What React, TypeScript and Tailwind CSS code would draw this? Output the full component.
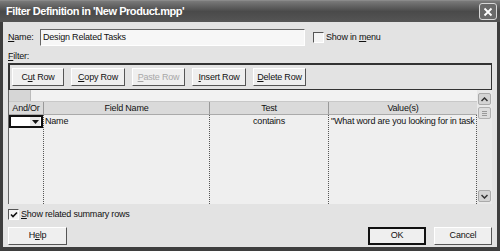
import * as React from "react";

const font = { fontFamily: '"Liberation Sans", Arial, sans-serif' };

const Btn = ({
  label,
  u,
  w = "w-[53px]",
  disabled = false,
  isDefault = false,
}: {
  label: string;
  u: number;
  w?: string;
  disabled?: boolean;
  isDefault?: boolean;
}) => (
  <div
    className={`${w} h-[18px] flex items-center justify-center bg-[#efefef] text-[9px] leading-none ${
      isDefault
        ? "border-2 border-[#111]"
        : "border border-t-white border-l-white border-r-[#555] border-b-[#555]"
    } ${disabled ? "text-[#a8a8a8]" : "text-[#111]"}`}
  >
    <span>
      {label.slice(0, u)}
      <span className="underline">{label.charAt(u)}</span>
      {label.slice(u + 1)}
    </span>
  </div>
);

const Check = ({ checked = false }: { checked?: boolean }) => (
  <div className="w-[11px] h-[11px] bg-[#f4f4f4] border border-t-[#555] border-l-[#555] border-r-white border-b-white flex items-center justify-center">
    {checked && (
      <svg width="8" height="8" viewBox="0 0 8 8">
        <path d="M1 3.5 L3 5.5 L7 1.5" stroke="#111" strokeWidth="1.6" fill="none" />
      </svg>
    )}
  </div>
);

export default function App() {
  return (
    <div className="w-[500px] h-[251px] bg-[#3e3e3e] flex flex-col overflow-hidden" style={font}>
      {/* Title bar */}
      <div className="h-[22px] shrink-0 flex items-center justify-between pl-[6px] pr-[3px] bg-gradient-to-b from-[#7a7a7a] via-[#4a4a4a] to-[#555] border-t border-[#8a8a8a]">
        <span className="text-white font-bold text-[11px] tracking-[-0.45px]">
          Filter Definition in 'New Product.mpp'
        </span>
        <div className="w-[18px] h-[17px] rounded-[3px] border border-[#d8d8d8] bg-[#6a6a6a] flex items-center justify-center">
          <svg width="10" height="10" viewBox="0 0 10 10">
            <path d="M1.5 1.5 L8.5 8.5 M8.5 1.5 L1.5 8.5" stroke="#fff" strokeWidth="1.8" />
          </svg>
        </div>
      </div>

      {/* Body */}
      <div className="flex-1 mx-[3px] mb-[4px] bg-[#e3e3e3] flex flex-col pl-[5px] pr-[5px] text-[9px] tracking-[-0.2px] text-[#111]">
        {/* Name row */}
        <div className="flex items-center mt-[7px] h-[17px]">
          <span className="w-[32px]">
            <span className="underline">N</span>ame:
          </span>
          <div className="w-[265px] h-[17px] bg-[#f7f7f7] border border-t-[#666] border-l-[#666] border-r-white border-b-white flex items-center pl-[2px]">
            Design Related Tasks
          </div>
          <div className="ml-[8px] flex items-center gap-[2px]">
            <Check />
            <span>
              Show in <span className="underline">m</span>enu
            </span>
          </div>
        </div>

        {/* Filter label */}
        <div className="mt-[4px] h-[12px] leading-[12px]">
          <span className="underline">F</span>ilter:
        </div>

        {/* Toolbar */}
        <div className="mt-[1px] h-[27px] border-2 border-[#333] border-r border-b flex items-center gap-[7px] pl-[2px]">
          <Btn label="Cut Row" u={1} w="w-[52px]" />
          <Btn label="Copy Row" u={0} w="w-[54px]" />
          <Btn label="Paste Row" u={0} w="w-[53px]" disabled />
          <Btn label="Insert Row" u={0} w="w-[54px]" />
          <Btn label="Delete Row" u={0} w="w-[53px]" />
        </div>

        {/* Grid */}
        <div className="h-[114px] flex border-l border-[#666]">
          <div className="flex-1 flex flex-col bg-[#efefef]">
            {/* edit bar */}
            <div className="h-[12px] flex border-b border-[#c8c8c8]">
              <div className="w-[22px] bg-[#d6d6d6] border-r border-[#bbb]" />
              <div className="flex-1 bg-[#f2f2f2]" />
            </div>
            {/* header */}
            <div className="h-[13px] flex bg-[#dadada] border-b border-[#aaa]">
              <div className="w-[35px] text-center border-r border-[#999]">And/Or</div>
              <div className="w-[166px] text-center border-r border-[#999]">Field Name</div>
              <div className="w-[119px] text-center border-r border-[#999]">Test</div>
              <div className="flex-1 text-center">Value(s)</div>
            </div>
            {/* rows */}
            <div className="flex-1 flex">
              <div className="w-[35px] border-r border-dotted border-[#555] flex flex-col">
                <div className="h-[13px] bg-white border-2 border-[#111] flex items-center justify-end pr-[1px]">
                  <div className="w-[10px] h-[9px] bg-[#e8e8e8] flex items-center justify-center">
                    <svg width="7" height="4" viewBox="0 0 7 4">
                      <path d="M0 0 L7 0 L3.5 4 Z" fill="#111" />
                    </svg>
                  </div>
                </div>
              </div>
              <div className="w-[166px] border-r border-dotted border-[#555] pl-[1px] leading-[13px]">Name</div>
              <div className="w-[119px] border-r border-dotted border-[#555] text-center leading-[13px]">contains</div>
              <div className="flex-1 border-r border-dotted border-[#555] pl-[2px] leading-[13px] whitespace-nowrap overflow-hidden">
                "What word are you looking for in task
              </div>
            </div>
          </div>
          {/* scrollbar */}
          <div className="w-[15px] bg-[#e9e9e9] flex flex-col items-center pt-[3px] pb-[2px]">
            <div className="w-[13px] h-[12px] rounded-[2px] bg-[#d4d4d4] border border-[#aaa] flex items-center justify-center">
              <svg width="7" height="5" viewBox="0 0 7 5">
                <path d="M0.5 4 L3.5 1 L6.5 4" stroke="#333" strokeWidth="1.5" fill="none" />
              </svg>
            </div>
            <div className="mt-[2px] w-[13px] h-[12px] rounded-[2px] bg-[#dcdcdc] border border-[#b0b0b0] flex flex-col items-center justify-center gap-[1px]">
              <div className="w-[5px] h-px bg-[#999]" />
              <div className="w-[5px] h-px bg-[#999]" />
              <div className="w-[5px] h-px bg-[#999]" />
            </div>
            <div className="flex-1" />
            <div className="w-[13px] h-[12px] rounded-[2px] bg-[#d4d4d4] border border-[#aaa] flex items-center justify-center">
              <svg width="7" height="5" viewBox="0 0 7 5">
                <path d="M0.5 1 L3.5 4 L6.5 1" stroke="#333" strokeWidth="1.5" fill="none" />
              </svg>
            </div>
          </div>
        </div>

        {/* summary rows */}
        <div className="mt-[4px] flex items-center gap-[2px]">
          <Check checked />
          <span>
            <span className="underline">S</span>how related summary rows
          </span>
        </div>

        {/* bottom buttons */}
        <div className="mt-[5px] flex items-center">
          <Btn label="Help" u={1} w="w-[59px]" />
          <div className="flex-1" />
          <Btn label="OK" u={99} w="w-[58px]" isDefault />
          <div className="w-[8px]" />
          <Btn label="Cancel" u={99} w="w-[58px]" />
        </div>
      </div>
    </div>
  );
}
